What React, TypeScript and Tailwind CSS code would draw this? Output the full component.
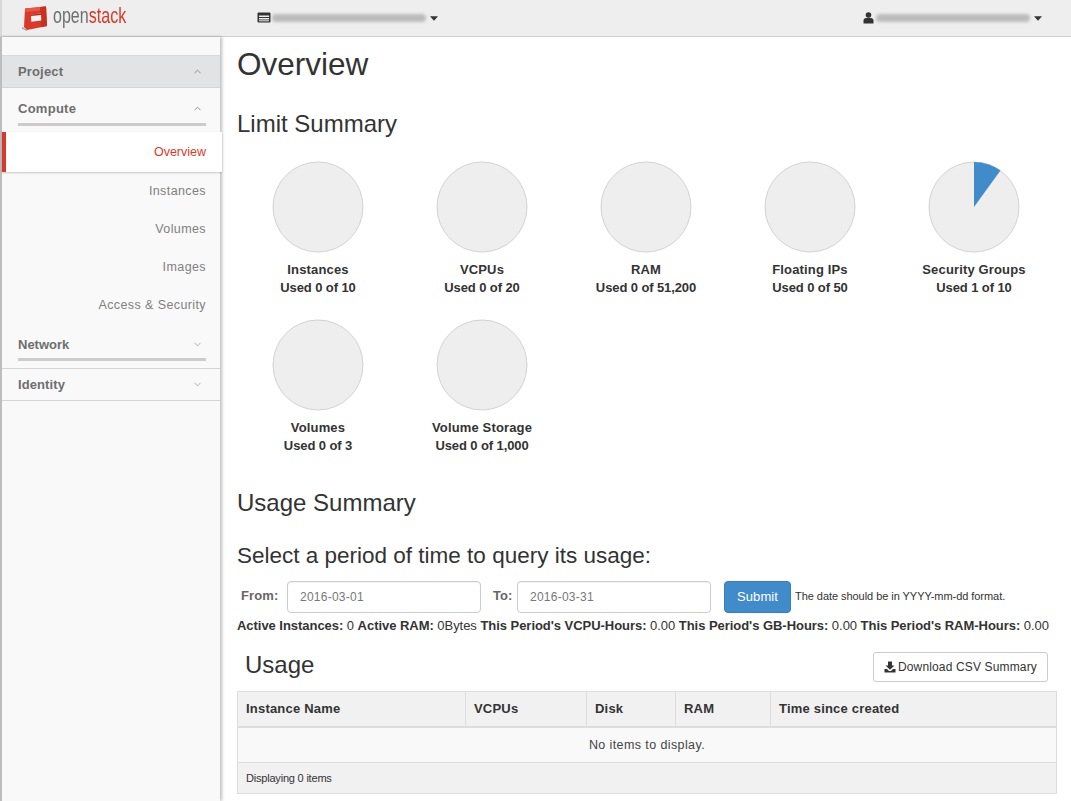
import { ChevronDown, ChevronUp } from "lucide-react";

const font = "font-['Liberation_Sans','Arial',sans-serif]";

const navItems = ["Instances", "Volumes", "Images", "Access & Security"];

const limits = [
  { label: "Instances", used: "Used 0 of 10" },
  { label: "VCPUs", used: "Used 0 of 20" },
  { label: "RAM", used: "Used 0 of 51,200" },
  { label: "Floating IPs", used: "Used 0 of 50" },
  { label: "Security Groups", used: "Used 1 of 10", slice: true },
  { label: "Volumes", used: "Used 0 of 3" },
  { label: "Volume Storage", used: "Used 0 of 1,000" },
];

const columns = [
  { label: "Instance Name", width: "w-[228px]" },
  { label: "VCPUs", width: "w-[121px]" },
  { label: "Disk", width: "w-[89px]" },
  { label: "RAM", width: "w-[95px]" },
  { label: "Time since created", width: "flex-1" },
];

function Logo() {
  return (
    <div className="flex items-center ml-[19px] w-[233px]">
      <svg width="28" height="26" viewBox="0 0 28 26">
        <path d="M1 22 L6 25 L6 26 L1 23.500 Z" fill="#9a9a9a" />
        <path d="M4 3.500 L25 1.500 L26 21 L6 25 L3 22 Z" fill="#d9392a" />
        <path d="M4 3.500 L25 1.500 L25.300 5 L4.300 7 Z" fill="#e4574a" />
        <path d="M19 2 L25 1.500 L26 21 L20 22.200 Z" fill="#c8301f" />
        <path d="M10 9.500 L20 8.500 L20.300 15.500 L10.300 16.800 Z" fill="#f4f1f0" />
        <path d="M10 9.500 L20 8.500 L20 10 L10 11 Z" fill="#b02a1c" />
      </svg>
      <span className="ml-[4px] text-[22px] leading-none origin-left scale-x-[0.73] font-['Liberation_Sans_Narrow','Liberation_Sans',sans-serif] -mt-1">
        <span className="text-[#6f6f6f]">open</span>
        <span className="text-[#d9392a]">stack</span>
      </span>
    </div>
  );
}

function BlurBar({ width }: { width: string }) {
  return <div className={`${width} h-[8px] rounded-sm bg-[#bcbcbc] blur-[1.500px]`} />;
}

function Caret() {
  return (
    <svg width="8" height="5" viewBox="0 0 8 5" className="ml-[4px]">
      <path d="M0 0.300 H8 L4 4.800 Z" fill="#333" />
    </svg>
  );
}

function Navbar() {
  return (
    <div className="flex items-center h-[37px] bg-[#eeeeee] border-b border-[#cfcfcf] border-l-2 border-l-[#d8d8d8]">
      <Logo />
      <svg width="15" height="12" viewBox="0 0 15 12" className="ml-[3px]">
        <rect x="0.500" y="0.500" width="13" height="10" rx="1" fill="#333" />
        <rect x="2" y="3.500" width="10" height="1.500" fill="#eee" />
        <rect x="2" y="6" width="10" height="1.500" fill="#eee" />
        <rect x="2" y="8.300" width="10" height="1" fill="#eee" />
      </svg>
      <BlurBar width="w-[154px]" />
      <Caret />
      <div className="flex-1" />
      <svg width="11" height="12" viewBox="0 0 11 12" className="mr-[2px]">
        <circle cx="5.500" cy="3" r="2.800" fill="#333" />
        <path d="M0.500 11.500 V8.500 C0.500 6.500 2.500 5.800 5.500 5.800 C8.500 5.800 10.500 6.500 10.500 8.500 V11.500 Z" fill="#333" />
      </svg>
      <BlurBar width="w-[154px]" />
      <div className="mr-[29px]">
        <Caret />
      </div>
    </div>
  );
}

function Sidebar() {
  return (
    <div className="w-[220px] shrink-0 border-l-2 border-[#bdbdbd] bg-[#f9f9f9] shadow-[2px_0_3px_rgba(0,0,0,0.25)] text-[13px] relative z-10">
      <div className="h-[19px] border-b border-[#d8d8d8]" />
      <div className="flex items-center justify-between h-[32px] pl-4 pr-[17px] bg-[#e2e3e5] border-b border-[#d4d4d4] font-bold text-[#6e6e6e] tracking-[0.15px]">
        <span>Project</span>
        <ChevronUp size={11} strokeWidth={2} className="text-[#8a8a8a]" />
      </div>
      <div className="pt-[12px] pl-4 pr-[14px]">
        <div className="flex items-center justify-between h-[17px] pr-[3px] font-bold text-[#6e6e6e] tracking-[0.27px]">
          <span>Compute</span>
          <ChevronUp size={11} strokeWidth={2} className="text-[#8a8a8a]" />
        </div>
        <div className="h-[3px] mt-[6px] bg-[#cccccc]" />
      </div>
      <div className="flex items-center justify-end h-[40px] mt-[6px] pr-4 bg-white border-l-4 border-[#d9392a] shadow-[0_1px_2px_rgba(0,0,0,0.2)] text-[#d9392a] text-[12.500px] w-[220px]">
        Overview
      </div>
      {navItems.map((item) => (
        <div key={item} className="flex items-center justify-end h-[38px] pr-[14px] text-[#808080] text-[12.500px] tracking-[0.4px]">
          {item}
        </div>
      ))}
      <div className="pl-4 pr-[14px] pt-[12px]">
        <div className="flex items-center justify-between h-[17px] pr-[3px] font-bold text-[#6e6e6e]">
          <span>Network</span>
          <ChevronDown size={11} strokeWidth={1.500} className="text-[#8a8a8a]" />
        </div>
        <div className="h-[3px] mt-[5px] bg-[#cccccc]" />
      </div>
      <div className="mt-[7px] border-y border-[#d4d4d4]">
        <div className="flex items-center justify-between h-[31px] pl-4 pr-[17px] font-bold text-[#6e6e6e] tracking-[0.1px]">
          <span>Identity</span>
          <ChevronDown size={11} strokeWidth={1.500} className="text-[#8a8a8a]" />
        </div>
      </div>
    </div>
  );
}

function LimitPie({ label, used, slice }: { label: string; used: string; slice?: boolean }) {
  return (
    <div className="flex flex-col items-center h-[158px] pt-[1px] text-[13px] leading-[18px] font-bold text-[#333333]">
      <svg width="92" height="92" viewBox="0 0 92 92">
        <circle cx="46" cy="46" r="45" fill="#eeeeee" stroke="#d3d3d3" />
        {slice && <path d="M46 46 V1 A45 45 0 0 1 72.450 9.600 Z" fill="#428bca" />}
      </svg>
      <div className="mt-[8px] tracking-[0.15px]">{label}</div>
      <div className="tracking-[-0.1px]">{used}</div>
    </div>
  );
}

function DateField({ value }: { value: string }) {
  return (
    <div className="flex items-center h-[32px] rounded-[4px] border border-[#cccccc] bg-white pl-3 text-[12px] tracking-[0.25px] text-[#777777] shadow-[inset_0_1px_1px_rgba(0,0,0,0.05)]">
      {value}
    </div>
  );
}

function Main() {
  return (
    <div className="flex-1 min-w-0 pl-[17px] pr-[14px] text-[#333333]">
      <h1 className="text-[31.500px] leading-[36px] mt-[9px]">Overview</h1>
      <h2 className="text-[24px] leading-[26px] mt-[29px]">Limit Summary</h2>
      <div className="grid grid-cols-5 w-[820px] mt-[23px] -ml-[1px]">
        {limits.map((l) => (
          <LimitPie key={l.label} label={l.label} used={l.used} slice={l.slice} />
        ))}
      </div>
      <h2 className="text-[24px] leading-[26px] mt-[14px]">Usage Summary</h2>
      <h3 className="text-[22.500px] leading-[26px] mt-[27px]">Select a period of time to query its usage:</h3>
      <div className="flex items-center mt-[12px] text-[13px]">
        <span className="ml-[4px] w-[46px] font-bold text-[#666666] tracking-[0.1px] -mt-[3px]">From:</span>
        <div className="w-[194px]">
          <DateField value="2016-03-01" />
        </div>
        <span className="ml-[12px] w-[24px] font-bold text-[#666666] -mt-[3px]">To:</span>
        <div className="w-[194px]">
          <DateField value="2016-03-31" />
        </div>
        <div className="flex items-center justify-center ml-[13px] w-[67px] h-[32px] rounded-[4px] border border-[#357ebd] bg-[#428bca] text-white tracking-[0.1px]">
          Submit
        </div>
        <span className="ml-[4px] text-[11px] -mt-[2px] tracking-[-0.05px]">The date should be in YYYY-mm-dd format.</span>
      </div>
      <div className="mt-[4px] text-[13px] leading-[18px] whitespace-nowrap tracking-[-0.04px]">
        <b>Active Instances:</b> 0 <b>Active RAM:</b> 0Bytes <b>This Period's VCPU-Hours:</b> 0.00{" "}
        <b>This Period's GB-Hours:</b> 0.00 <b>This Period's RAM-Hours:</b> 0.00
      </div>
      <div className="flex items-center justify-between mt-[17px] h-[30px] pl-[8px] pr-[9px]">
        <span className="text-[24px] -mt-[4px]">Usage</span>
        <div className="flex items-center h-[30px] px-[10px] rounded-[3px] border border-[#cccccc] bg-white text-[12px] tracking-[0.15px]">
          <svg width="12" height="12" viewBox="0 0 12 12" className="mr-[2px]">
            <path d="M4 0.500 H8 V4.500 H10.500 L6 8.800 L1.500 4.500 H4 Z" fill="#333" />
            <path d="M0.500 8 H3 L5 10 H7 L9 8 H11.500 V11.500 H0.500 Z" fill="#333" />
          </svg>
          Download CSV Summary
        </div>
      </div>
      <div className="mt-[9px] border border-[#dddddd] text-[13px]">
        <div className="flex h-[36px] bg-[#f1f1f1] border-b-2 border-[#dddddd] font-bold tracking-[0.2px]">
          {columns.map((c, i) => (
            <div key={c.label} className={`${c.width} flex items-center pl-2 ${i < columns.length - 1 ? "border-r border-[#dddddd]" : ""}`}>
              {c.label}
            </div>
          ))}
        </div>
        <div className="flex items-center justify-center h-[35px] bg-[#f9f9f9] border-b border-[#dddddd] text-[12.500px] tracking-[0.4px] text-[#444444]">
          No items to display.
        </div>
        <div className="flex items-center h-[30px] bg-[#f1f1f1] pl-2 text-[11px] tracking-[-0.2px]">Displaying 0 items</div>
      </div>
    </div>
  );
}

export default function App() {
  return (
    <div className={`${font} w-[1071px] h-[801px] overflow-hidden flex flex-col bg-white`}>
      <Navbar />
      <div className="flex flex-1 min-h-0">
        <Sidebar />
        <Main />
      </div>
    </div>
  );
}
